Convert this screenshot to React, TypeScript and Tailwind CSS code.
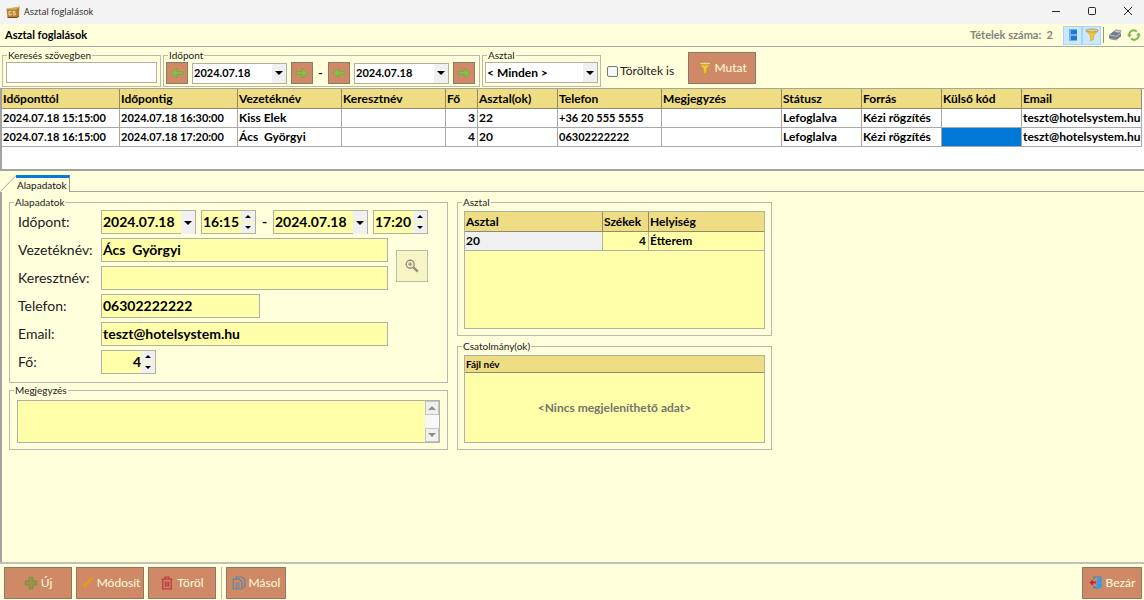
import { useState } from 'react'
import type { ReactNode } from 'react'
import clsx from 'clsx'

const reservations = [
  {
    from: '2024.07.18 15:15:00',
    to: '2024.07.18 16:30:00',
    lastName: 'Kiss Elek',
    firstName: '',
    guests: 3,
    tables: '22',
    phone: '+36 20 555 5555',
    note: '',
    status: 'Lefoglalva',
    source: 'Kézi rögzítés',
    externalCode: '',
    email: 'teszt@hotelsystem.hu',
  },
  {
    from: '2024.07.18 16:15:00',
    to: '2024.07.18 17:20:00',
    lastName: 'Ács  Györgyi',
    firstName: '',
    guests: 4,
    tables: '20',
    phone: '06302222222',
    note: '',
    status: 'Lefoglalva',
    source: 'Kézi rögzítés',
    externalCode: '',
    email: 'teszt@hotelsystem.hu',
  },
]

type Reservation = (typeof reservations)[number]

const columns: { key: keyof Reservation; label: string; width: string; numeric?: boolean }[] = [
  { key: 'from', label: 'Időponttól', width: 'w-[118px]', numeric: true },
  { key: 'to', label: 'Időpontig', width: 'w-[118px]', numeric: true },
  { key: 'lastName', label: 'Vezetéknév', width: 'w-[104px]' },
  { key: 'firstName', label: 'Keresztnév', width: 'w-[104px]' },
  { key: 'guests', label: 'Fő', width: 'w-8' },
  { key: 'tables', label: 'Asztal(ok)', width: 'w-20' },
  { key: 'phone', label: 'Telefon', width: 'w-[104px]', numeric: true },
  { key: 'note', label: 'Megjegyzés', width: 'w-[120px]' },
  { key: 'status', label: 'Státusz', width: 'w-20' },
  { key: 'source', label: 'Forrás', width: 'w-20' },
  { key: 'externalCode', label: 'Külső kód', width: 'w-20' },
  { key: 'email', label: 'Email', width: 'w-auto' },
]

function Arrow({ left = false }: { left?: boolean }) {
  return (
    <svg viewBox="0 0 14 12" className={clsx('w-[14px] h-3', left && 'rotate-180')} aria-hidden="true">
      <path d="M1 4.6h6.2V1.4L13 6l-5.8 4.6V7.4H1z" fill="#83c341" stroke="#6fa544" strokeWidth="0.7" />
    </svg>
  )
}

function Triangle({ up = false, small = false }: { up?: boolean; small?: boolean }) {
  return (
    <svg
      viewBox="0 0 8 4"
      className={clsx(small ? 'w-[6px] h-[3px]' : 'w-2 h-1', up && 'rotate-180')}
      fill="currentColor"
      aria-hidden="true"
    >
      <path d="M0 0h8L4 4z" />
    </svg>
  )
}

function Funnel({ className }: { className: string }) {
  return (
    <svg viewBox="0 0 14 14" className={className} aria-hidden="true">
      <path d="M1 2.6l4.7 5.2v5L8.5 11.4V7.8L13 2.6z" fill="#f5c92a" stroke="#c79a2a" strokeWidth="0.6" />
      <ellipse cx="7" cy="2.5" rx="6" ry="1.5" fill="#e8d69a" stroke="#a9843a" strokeWidth="0.8" />
    </svg>
  )
}

function Group({ title, className, children }: { title: string; className?: string; children: ReactNode }) {
  return (
    <fieldset className="border border-[#b9b9ae]">
      <legend className="ml-1 px-px text-[10px] leading-3 text-[#222]">{title}</legend>
      <div className={className}>{children}</div>
    </fieldset>
  )
}

function Combo({ label, value, size = 'sm', className }: { label: string; value: string; size?: 'sm' | 'md' | 'lg'; className: string }) {
  return (
    <div className={clsx('grid border border-[#b0b0a4]', size === 'lg' ? 'h-6 bg-[#ffffaa]' : 'h-[21px] bg-white', className)}>
      <select
        aria-label={label}
        className={clsx(
          'col-start-1 row-start-1 w-full appearance-none pl-px font-bold text-black outline-none',
          size === 'sm' && 'text-[11px]',
          size === 'md' && 'text-[12px]',
          size === 'lg' && 'pb-[2px] text-[14px]'
        )}
      >
        <option>{value}</option>
      </select>
      <span className="pointer-events-none col-start-1 row-start-1 flex w-[14px] items-center justify-center justify-self-end bg-[#f0f0f0] text-black">
        <Triangle />
      </span>
    </div>
  )
}

function Spinner({ label, value, right = false }: { label: string; value: string; right?: boolean }) {
  return (
    <div className="flex h-6 w-[55px] border border-[#b0b0a4] bg-[#ffffaa]">
      <input
        aria-label={label}
        defaultValue={value}
        className={clsx('w-0 min-w-0 flex-1 pb-[2px] pl-px text-[14px] font-bold text-black outline-none', right && 'text-right')}
      />
      <div className="flex w-[14px] flex-col gap-px">
        <button type="button" aria-label={`${label} növelése`} className="flex flex-1 items-center justify-center bg-[#f0f0f0] text-black">
          <Triangle up small />
        </button>
        <button type="button" aria-label={`${label} csökkentése`} className="flex flex-1 items-center justify-center bg-[#f0f0f0] text-black">
          <Triangle small />
        </button>
      </div>
    </div>
  )
}

function StepButton({ label, left }: { label: string; left?: boolean }) {
  return (
    <button
      type="button"
      aria-label={label}
      className="flex h-[22px] w-[22px] items-center justify-center border border-[#8b7a66] bg-[#d08966]"
    >
      <Arrow left={left} />
    </button>
  )
}

function ActionButton({ className, icon, children }: { className: string; icon: ReactNode; children: ReactNode }) {
  return (
    <button
      type="button"
      className={clsx(
        'flex h-8 items-center justify-center gap-[3px] border border-[#8b7a66] bg-[#d08966] text-[12px] text-[#ffffdc]',
        className
      )}
    >
      {icon}
      {children}
    </button>
  )
}

function TextField({ id, value, className }: { id: string; value?: string; className: string }) {
  return (
    <input
      id={id}
      defaultValue={value}
      className={clsx('h-6 border border-[#b0b0a4] bg-[#ffffaa] pb-[2px] pl-px text-[14px] font-bold text-black outline-none', className)}
    />
  )
}

function TitleBar() {
  return (
    <header className="flex h-6 items-center bg-[#f3f3f3] pl-[6px] pr-[10px]">
      <svg viewBox="0 0 14 12" className="h-3 w-[14px]" aria-hidden="true">
        <path d="M0.5 2.5L9 1.5 13.5 0.5 13 10 11 11.5H1.5z" fill="#b9812f" />
        <path d="M0.5 2.5L9 3l4.5-2.5" fill="none" stroke="#e8c67e" strokeWidth="0.9" />
        <path d="M1.5 11.5L11 11.5 13 10" fill="none" stroke="#6e4714" />
        <path d="M5.4 5.5H3v3.4h2.2V7.3M9.4 5.5H7.2v1.6h2v1.8H7" fill="none" stroke="#f5e3b4" strokeWidth="0.9" />
      </svg>
      <span className="ml-1 font-['Open_Sans',sans-serif] text-[9px] leading-3 text-[#222]">Asztal foglalások</span>
      <div className="ml-auto flex items-center gap-6 text-[#222]">
        <button type="button" aria-label="Kis méret" className="flex h-3 w-3 items-center justify-center">
          <svg viewBox="0 0 12 12" className="h-3 w-3" stroke="currentColor"><path d="M2 5.5h8" /></svg>
        </button>
        <button type="button" aria-label="Teljes méret" className="flex h-3 w-3 items-center justify-center">
          <svg viewBox="0 0 12 12" className="h-3 w-3" fill="none" stroke="currentColor"><rect x="2.5" y="1.5" width="7" height="7" rx="1" /></svg>
        </button>
        <button type="button" aria-label="Bezárás" className="flex h-3 w-3 items-center justify-center">
          <svg viewBox="0 0 12 12" className="h-3 w-3" stroke="currentColor"><path d="M2 1l8 8M10 1l-8 8" /></svg>
        </button>
      </div>
    </header>
  )
}

function Toolbar() {
  return (
    <div className="flex h-[23px] items-center border-b border-[#a9a9a0] pl-[5px] pr-[3px]">
      <h1 className="text-[11px] font-bold text-black">Asztal foglalások</h1>
      <div className="ml-auto flex items-center">
        <span className="mr-[10px] whitespace-pre text-[11px] font-bold text-[#85857c]">Tételek száma:  2</span>
        <button type="button" aria-label="Nézet" className="flex h-[19px] w-[19px] items-center justify-center border border-[#a6d5f7] bg-[#cce8ff]">
          <svg viewBox="0 0 10 12" className="h-3 w-[10px]" aria-hidden="true">
            <path d="M1 0.5h8v5H1zM1 6.5h8v5H1z" fill="#1f78d8" />
            <path d="M1 0.5h2v5H1zM1 6.5h2v5H1z" fill="#6fb1ee" />
          </svg>
        </button>
        <button type="button" aria-label="Szűrő" className="flex h-[19px] w-[19px] items-center justify-center border border-[#a6d5f7] bg-[#cce8ff]">
          <Funnel className="h-[14px] w-[14px]" />
        </button>
        <span className="ml-[2px] h-4 w-px bg-[#8f8f88]" />
        <button type="button" aria-label="Nyomtatás" className="ml-1 flex h-4 w-[14px] items-center">
          <svg viewBox="0 0 14 12" className="h-3 w-[14px]" aria-hidden="true">
            <path d="M1 6l4-3.5 8 1L13 7.5 9 10.5 1 9z" fill="#76808c" />
            <path d="M5.5 2.5L8 0.8l5.2 1-2.4 2.4z" fill="#c3cbd4" stroke="#6d7680" strokeWidth="0.6" />
            <path d="M1 6l8 1.3 4-3.6" fill="none" stroke="#bcc6d2" strokeWidth="0.9" />
            <path d="M1.5 8.8l5.8 1 1.2 1.2-6-1z" fill="#dfe6ee" stroke="#59636e" strokeWidth="0.6" />
          </svg>
        </button>
        <button type="button" aria-label="Frissítés" className="ml-[5px] flex h-4 w-[14px] items-center">
          <svg viewBox="0 0 14 12" className="h-3 w-[14px]" fill="none" aria-hidden="true">
            <path d="M2.4 6.8A4.4 4.4 0 0 1 9.8 2.6M11.6 5.4A4.4 4.4 0 0 1 4.2 9.5" stroke="#7db84c" strokeWidth="2" />
            <path d="M0 5.6h4.8L2.4 8.8zM14 6.4H9.2l2.4-3.2z" fill="#7db84c" />
          </svg>
        </button>
      </div>
    </div>
  )
}

function Filters() {
  return (
    <div className="flex h-[41px] items-start gap-[2px] pl-[2px] pt-[2px]">
      <Group title="Keresés szövegben" className="w-[157px] px-[3px] pb-[3px] pt-px">
        <input aria-label="Keresés szövegben" className="block h-[21px] w-full border border-[#b0b0a4] bg-white px-1 text-[11px] outline-none" />
      </Group>
      <Group title="Időpont" className="pb-[2px] pl-[2px] pr-1 pt-px">
        <div className="flex items-center">
          <StepButton left label="Kezdő nap vissza" />
          <Combo label="Kezdő nap" value="2024.07.18" className="ml-1 w-[95px]" />
          <span className="ml-1"><StepButton label="Kezdő nap előre" /></span>
          <span className="w-[15px] text-center text-[12px] font-bold leading-4">-</span>
          <StepButton left label="Záró nap vissza" />
          <Combo label="Záró nap" value="2024.07.18" className="ml-1 w-[95px]" />
          <span className="ml-1"><StepButton label="Záró nap előre" /></span>
        </div>
      </Group>
      <Group title="Asztal" className="px-[2px] pb-[3px] pt-px">
        <Combo size="md" label="Asztal" value="< Minden >" className="w-[113px]" />
      </Group>
      <label className="ml-1 mt-[14px] flex items-center gap-[2px] text-[12px] leading-4 text-[#222]">
        <input type="checkbox" className="h-[11px] w-[11px] appearance-none rounded-[2px] border border-[#777] bg-[#f6f6f6]" />
        Töröltek is
      </label>
      <ActionButton className="ml-3 mt-[3px] w-[68px]" icon={<Funnel className="h-[14px] w-[14px]" />}>
        Mutat
      </ActionButton>
    </div>
  )
}

function ReservationTable() {
  const [selected, setSelected] = useState(1)

  return (
    <div className="h-[83px] border-b-2 border-l-2 border-t border-[#a3a3a0] bg-white pr-[2px]">
      <table className="w-full table-fixed border-separate border-spacing-0 text-[12px] font-bold text-black">
        <thead>
          <tr className="h-5 bg-[#eedd82]">
            {columns.map((col) => (
              <th key={col.key} className={clsx('border-b border-r border-[#8f8a70] py-0 pl-px pr-[2px] text-left leading-4', col.width)}>
                {col.label}
              </th>
            ))}
          </tr>
        </thead>
        <tbody>
          {reservations.map((row, i) => (
            <tr key={row.from} className="h-[19px]" onClick={() => setSelected(i)}>
              {columns.map((col) => (
                <td
                  key={col.key}
                  className={clsx(
                    'overflow-hidden whitespace-pre border-b border-r border-[#a8a8a8] py-0 pl-px pr-[2px] leading-4',
                    col.numeric && 'text-[11px]',
                    col.key === 'guests' && 'text-right',
                    col.key === 'externalCode' && i === selected && 'bg-[#0078d7]'
                  )}
                >
                  {row[col.key]}
                </td>
              ))}
            </tr>
          ))}
        </tbody>
      </table>
    </div>
  )
}

function TabStrip() {
  return (
    <div className="mt-1 flex items-end">
      <svg viewBox="0 0 16 17" className="h-[17px] w-4" aria-hidden="true">
        <path d="M0.5 16.5L16 0.5" stroke="#a3a3a0" fill="none" />
      </svg>
      <button
        type="button"
        className="h-[17px] border-r border-t-[3px] border-r-[#8f8f88] border-t-[#0a78d7] pl-px pr-[3px] text-[10px] leading-[14px] text-[#111]"
      >
        Alapadatok
      </button>
      <div className="flex-1 border-b border-[#a3a3a0]" />
    </div>
  )
}

function BasicData() {
  const label = 'self-center text-[14px] leading-4 text-[#222]'

  return (
    <Group title="Alapadatok" className="pb-2 pl-2 pt-[2px]">
      <div className="grid grid-cols-[79px_287px_auto] justify-start gap-x-1 gap-y-1">
        <span className={label}>Időpont:</span>
        <div className="col-span-2 flex items-center">
          <Combo size="lg" label="Kezdő dátum" value="2024.07.18" className="w-[95px]" />
          <span className="ml-[5px]"><Spinner label="Kezdő időpont" value="16:15" /></span>
          <span className="w-[17px] text-center text-[14px] font-bold leading-4">-</span>
          <Combo size="lg" label="Záró dátum" value="2024.07.18" className="w-[95px]" />
          <span className="ml-[5px]"><Spinner label="Záró időpont" value="17:20" /></span>
        </div>

        <label htmlFor="lastName" className={label}>Vezetéknév:</label>
        <TextField id="lastName" value="Ács  Györgyi" className="w-full" />
        <button
          type="button"
          aria-label="Vendég keresése"
          className="row-span-2 ml-1 mt-1 flex h-8 w-8 items-center justify-center self-center border border-[#b9b9ae] bg-[#f7f5c4]"
        >
          <svg viewBox="0 0 14 14" className="h-[14px] w-[14px]" fill="none" stroke="#8f8f86" aria-hidden="true">
            <circle cx="5.2" cy="5.2" r="4" strokeWidth="1.4" />
            <path d="M5.2 3.2v4M3.2 5.2h4" strokeWidth="1.2" />
            <path d="M8.4 8.4l4.4 4.2" strokeWidth="2.4" />
          </svg>
        </button>

        <label htmlFor="firstName" className={label}>Keresztnév:</label>
        <TextField id="firstName" className="w-full" />

        <label htmlFor="phone" className={label}>Telefon:</label>
        <TextField id="phone" value="06302222222" className="col-span-2 w-[159px]" />

        <label htmlFor="email" className={label}>Email:</label>
        <TextField id="email" value="teszt@hotelsystem.hu" className="w-full" />

        <span className={clsx(label, 'col-start-1')}>Fő:</span>
        <Spinner right label="Fő" value="4" />
      </div>
    </Group>
  )
}

function Note() {
  return (
    <Group title="Megjegyzés" className="px-[7px] pb-[6px] pt-1">
      <div className="flex h-[43px] border border-[#b0b0a4] bg-[#ffffaa]">
        <textarea aria-label="Megjegyzés" className="min-w-0 flex-1 resize-none px-1 text-[14px] font-bold outline-none" />
        <div className="flex w-[14px] flex-col justify-between bg-[#f8f8f8] text-[#909090]">
          <button type="button" aria-label="Fel" className="flex h-[14px] items-center justify-center border border-[#c4c4c0] bg-[#f0f0f0]">
            <Triangle up />
          </button>
          <button type="button" aria-label="Le" className="flex h-[14px] items-center justify-center border border-[#c4c4c0] bg-[#f0f0f0]">
            <Triangle />
          </button>
        </div>
      </div>
    </Group>
  )
}

function TableList() {
  const th = 'border-b border-[#8f8a70] py-0 pl-px pr-[2px] text-left leading-4'
  const td = 'border-b border-[#b0b0a4] py-0 pl-px pr-[2px] leading-4'

  return (
    <Group title="Asztal" className="px-[6px] pb-[6px] pt-[3px]">
      <div className="h-[118px] border border-[#b0b0a4] bg-[#ffffaa]">
        <table className="w-full table-fixed border-separate border-spacing-0 text-[12px] font-bold text-black">
          <thead>
            <tr className="h-5 bg-[#eedd82]">
              <th className={clsx(th, 'w-[138px] border-r')}>Asztal</th>
              <th className={clsx(th, 'w-[46px] border-r')}>Székek</th>
              <th className={th}>Helyiség</th>
            </tr>
          </thead>
          <tbody>
            <tr className="h-[19px]">
              <td className={clsx(td, 'border-r bg-[#f0f0f0]')}>20</td>
              <td className={clsx(td, 'border-r text-right')}>4</td>
              <td className={td}>Étterem</td>
            </tr>
          </tbody>
        </table>
      </div>
    </Group>
  )
}

function Attachments() {
  return (
    <Group title="Csatolmány(ok)" className="px-[6px] pb-[6px] pt-[3px]">
      <div className="flex h-[88px] flex-col border border-[#b0b0a4] bg-[#ffffaa]">
        <div className="h-[17px] border-b border-[#8f8a70] bg-[#eedd82] px-px text-[10px] font-bold leading-4 text-black">Fájl név</div>
        <p className="flex flex-1 items-center justify-center text-[12px] font-bold text-[#75756a]">
          {'<Nincs megjeleníthető adat>'}
        </p>
      </div>
    </Group>
  )
}

function Footer() {
  return (
    <footer className="flex items-center gap-1 border-t-2 border-[#c2c2bc] pb-px pl-1 pr-[2px] pt-[3px]">
      <ActionButton
        className="w-[68px]"
        icon={
          <svg viewBox="0 0 14 14" className="h-[14px] w-[14px]" fill="#a98a4c" stroke="#6f9a3c" aria-hidden="true">
            <path d="M5.2 1.4h3.6v3.8h3.8v3.6H8.8v3.8H5.2V8.8H1.4V5.2h3.8z" strokeWidth="1.2" />
          </svg>
        }
      >
        Új
      </ActionButton>
      <ActionButton
        className="w-[68px]"
        icon={
          <svg viewBox="0 0 14 14" className="h-[14px] w-[14px] shrink-0" aria-hidden="true">
            <path d="M1 13l1.2-3.2L11 1l2 2-8.8 8.8z" fill="#e09a1e" />
            <path d="M1 13l1.2-3.2 2 2z" fill="#b98a4a" />
          </svg>
        }
      >
        Módosít
      </ActionButton>
      <ActionButton
        className="w-[68px]"
        icon={
          <svg viewBox="0 0 14 14" className="h-[14px] w-[14px]" fill="none" stroke="#bd3b44" strokeWidth="1.3" aria-hidden="true">
            <path d="M1.5 3.2h11M5 3V1.2h4V3M2.8 3.4v9.4h8.4V3.4M5.4 5.4v5.4M7 5.4v5.4M8.6 5.4v5.4" />
          </svg>
        }
      >
        Töröl
      </ActionButton>
      <span className="ml-px h-8 w-px bg-[#b9b9ae]" />
      <ActionButton
        className="w-[60px]"
        icon={
          <svg viewBox="0 0 14 14" className="h-[14px] w-[14px] shrink-0" fill="none" stroke="#5f87a0" strokeWidth="1.2" aria-hidden="true">
            <path d="M4 3V1h6l2.8 2.6V11h-2.4" />
            <path d="M1.2 3.2h6l2.8 2.6v7H1.2zM3.2 7h4.6M3.2 9h4.6M3.2 11h4.6" />
          </svg>
        }
      >
        Másol
      </ActionButton>
      <ActionButton
        className="ml-auto w-[60px]"
        icon={
          <svg viewBox="0 0 14 14" className="h-[14px] w-[14px] shrink-0" aria-hidden="true">
            <path d="M7.5 3.2L12.8 1v10.6L7.5 13.6z" fill="#3d9bdc" />
            <path d="M5 3.4V1h7.6M5 9.6v2h2.5" fill="none" stroke="#3d86bd" strokeWidth="1.2" />
            <path d="M0.4 6.6L4 3.4v2.2h3v2H4v2.2z" fill="#c9242f" />
          </svg>
        }
      >
        Bezár
      </ActionButton>
    </footer>
  )
}

export default function App() {
  return (
    <div className="flex min-h-screen flex-col bg-[#ffffdc] font-[Lato,'Liberation_Sans',sans-serif]">
      <TitleBar />
      <Toolbar />
      <Filters />
      <ReservationTable />
      <TabStrip />
      <main className="flex flex-1 items-start gap-[9px] border-l-2 border-[#a3a3a0] pl-[7px] pt-1">
        <div className="flex w-[439px] flex-col gap-px">
          <BasicData />
          <Note />
        </div>
        <div className="flex w-[315px] flex-col gap-1">
          <TableList />
          <Attachments />
        </div>
      </main>
      <Footer />
    </div>
  )
}
